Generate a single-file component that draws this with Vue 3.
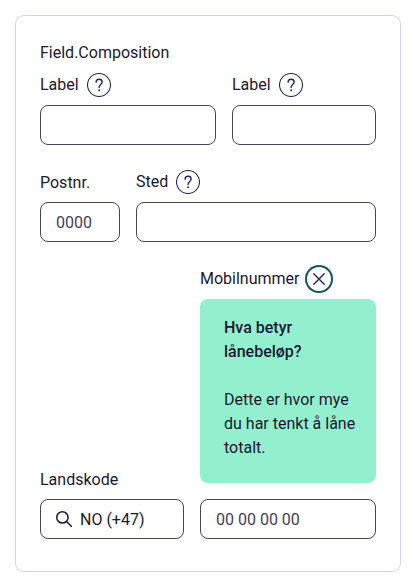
<script setup>
import { ref } from 'vue'

const fields = ref({ first: '', second: '', postal: '', city: '', code: 'NO (+47)', phone: '' })
</script>

<template>
  <main class="card">
    <h1 class="title">Field.Composition</h1>

    <div class="row row-labels">
      <div class="field wide">
        <div class="label-line">
          <label for="first">Label</label>
          <button class="help" type="button">
            <svg viewBox="0 0 24 24"><circle class="ring" cx="12" cy="12" r="11.5" /><path d="M9.1 9.2C9.1 7.3 10.3 6.2 12.1 6.2s3 1.1 3 2.7c0 2.5-3 2.6-3 5.6" /><circle class="dot" cx="12.1" cy="17.3" r=".95" /></svg>
          </button>
        </div>
        <input id="first" v-model="fields.first" />
      </div>
      <div class="field medium">
        <div class="label-line">
          <label for="second">Label</label>
          <button class="help" type="button">
            <svg viewBox="0 0 24 24"><circle class="ring" cx="12" cy="12" r="11.5" /><path d="M9.1 9.2C9.1 7.3 10.3 6.2 12.1 6.2s3 1.1 3 2.7c0 2.5-3 2.6-3 5.6" /><circle class="dot" cx="12.1" cy="17.3" r=".95" /></svg>
          </button>
        </div>
        <input id="second" v-model="fields.second" />
      </div>
    </div>

    <div class="row row-place">
      <div class="field small">
        <label class="plain" for="postal">Postnr.</label>
        <input id="postal" v-model="fields.postal" placeholder="0000" />
      </div>
      <div class="field city">
        <div class="label-line">
          <label for="city">Sted</label>
          <button class="help" type="button">
            <svg viewBox="0 0 24 24"><circle class="ring" cx="12" cy="12" r="11.5" /><path d="M9.1 9.2C9.1 7.3 10.3 6.2 12.1 6.2s3 1.1 3 2.7c0 2.5-3 2.6-3 5.6" /><circle class="dot" cx="12.1" cy="17.3" r=".95" /></svg>
          </button>
        </div>
        <input id="city" v-model="fields.city" />
      </div>
    </div>

    <div class="row row-phone">
      <div class="field medium">
        <label class="plain" for="code">Landskode</label>
        <div class="search">
          <svg viewBox="0 0 16 16"><circle cx="6.4" cy="6.4" r="5.65" /><path d="M10.5 10.5 15.3 15.2" /></svg>
          <input id="code" v-model="fields.code" />
        </div>
      </div>
      <div class="field wide">
        <div class="label-line">
          <label for="phone">Mobilnummer</label>
          <button class="help open" type="button">
            <svg viewBox="0 0 24 24"><path d="m6.8 6.8 10.4 10.4M17.2 6.8 6.8 17.2" /></svg>
          </button>
        </div>
        <section class="info">
          <strong>Hva betyr lånebeløp?</strong>
          <p>Dette er hvor mye du har tenkt å låne totalt.</p>
        </section>
        <input id="phone" v-model="fields.phone" placeholder="00 00 00 00" />
      </div>
    </div>
  </main>
</template>

<style>
body { background: #fff; }
</style>

<style scoped>
* { box-sizing: border-box; }
.card {
  width: 386px;
  height: 557px;
  margin: 15px;
  padding: 25px 24px 24px;
  border: 1px solid #d6d5e5;
  border-radius: 9px;
  color: #1b1930;
  font: 400 16px/24px Roboto, sans-serif;
}
.title { margin: 0; font: inherit; }
.row { display: flex; gap: 16px; align-items: flex-end; }
.row-labels { margin-top: 8px; }
.row-place { margin-top: 25px; }
.row-phone { margin-top: 23px; }
.field { display: flex; flex-direction: column; }
.small { width: 80px; }
.medium { width: 144px; }
.wide { width: 176px; }
.city { width: 240px; }
.label-line { display: flex; align-items: center; gap: 8px; margin-bottom: 8px; }
.plain { margin-bottom: 7px; }
input {
  display: block;
  width: 100%;
  height: 40px;
  margin: 0;
  padding: 0 15px;
  border: 1px solid #474454;
  border-radius: 8px;
  outline: 0;
  background: #fff;
  color: #1b1930;
  font: inherit;
}
input::placeholder { color: #434055; opacity: 1; }
.help {
  width: 24px;
  height: 24px;
  padding: 0;
  border: 0;
  border-radius: 50%;
  background: none;
}
.help svg {
  display: block;
  width: 24px;
  height: 24px;
  fill: none;
  stroke: #272367;
  stroke-width: 1.4;
  stroke-linecap: round;
}
.help .ring { stroke-width: 1.1; }
.help .dot { fill: #272367; stroke: none; }
.help.open { box-shadow: 0 0 0 2px #14555a; }
.row-phone .label-line { padding: 2px 0; margin-bottom: 6px; }
.info {
  height: 184px;
  margin-bottom: 16px;
  padding: 17px 16px 23px 24px;
  border-radius: 8px;
  background: #94efcf;
}
.info strong { display: block; width: 110px; font-weight: 500; }
.info p { margin: 24px 0 0; }
.search {
  display: flex;
  align-items: center;
  gap: 8px;
  height: 40px;
  padding: 0 15px;
  border: 1px solid #474454;
  border-radius: 8px;
}
.search svg {
  flex: none;
  width: 16px;
  height: 16px;
  fill: none;
  stroke: #1b1930;
  stroke-width: 1.5;
  stroke-linecap: round;
}
.search input { height: 38px; padding: 1px 0 0; border: 0; }
</style>
